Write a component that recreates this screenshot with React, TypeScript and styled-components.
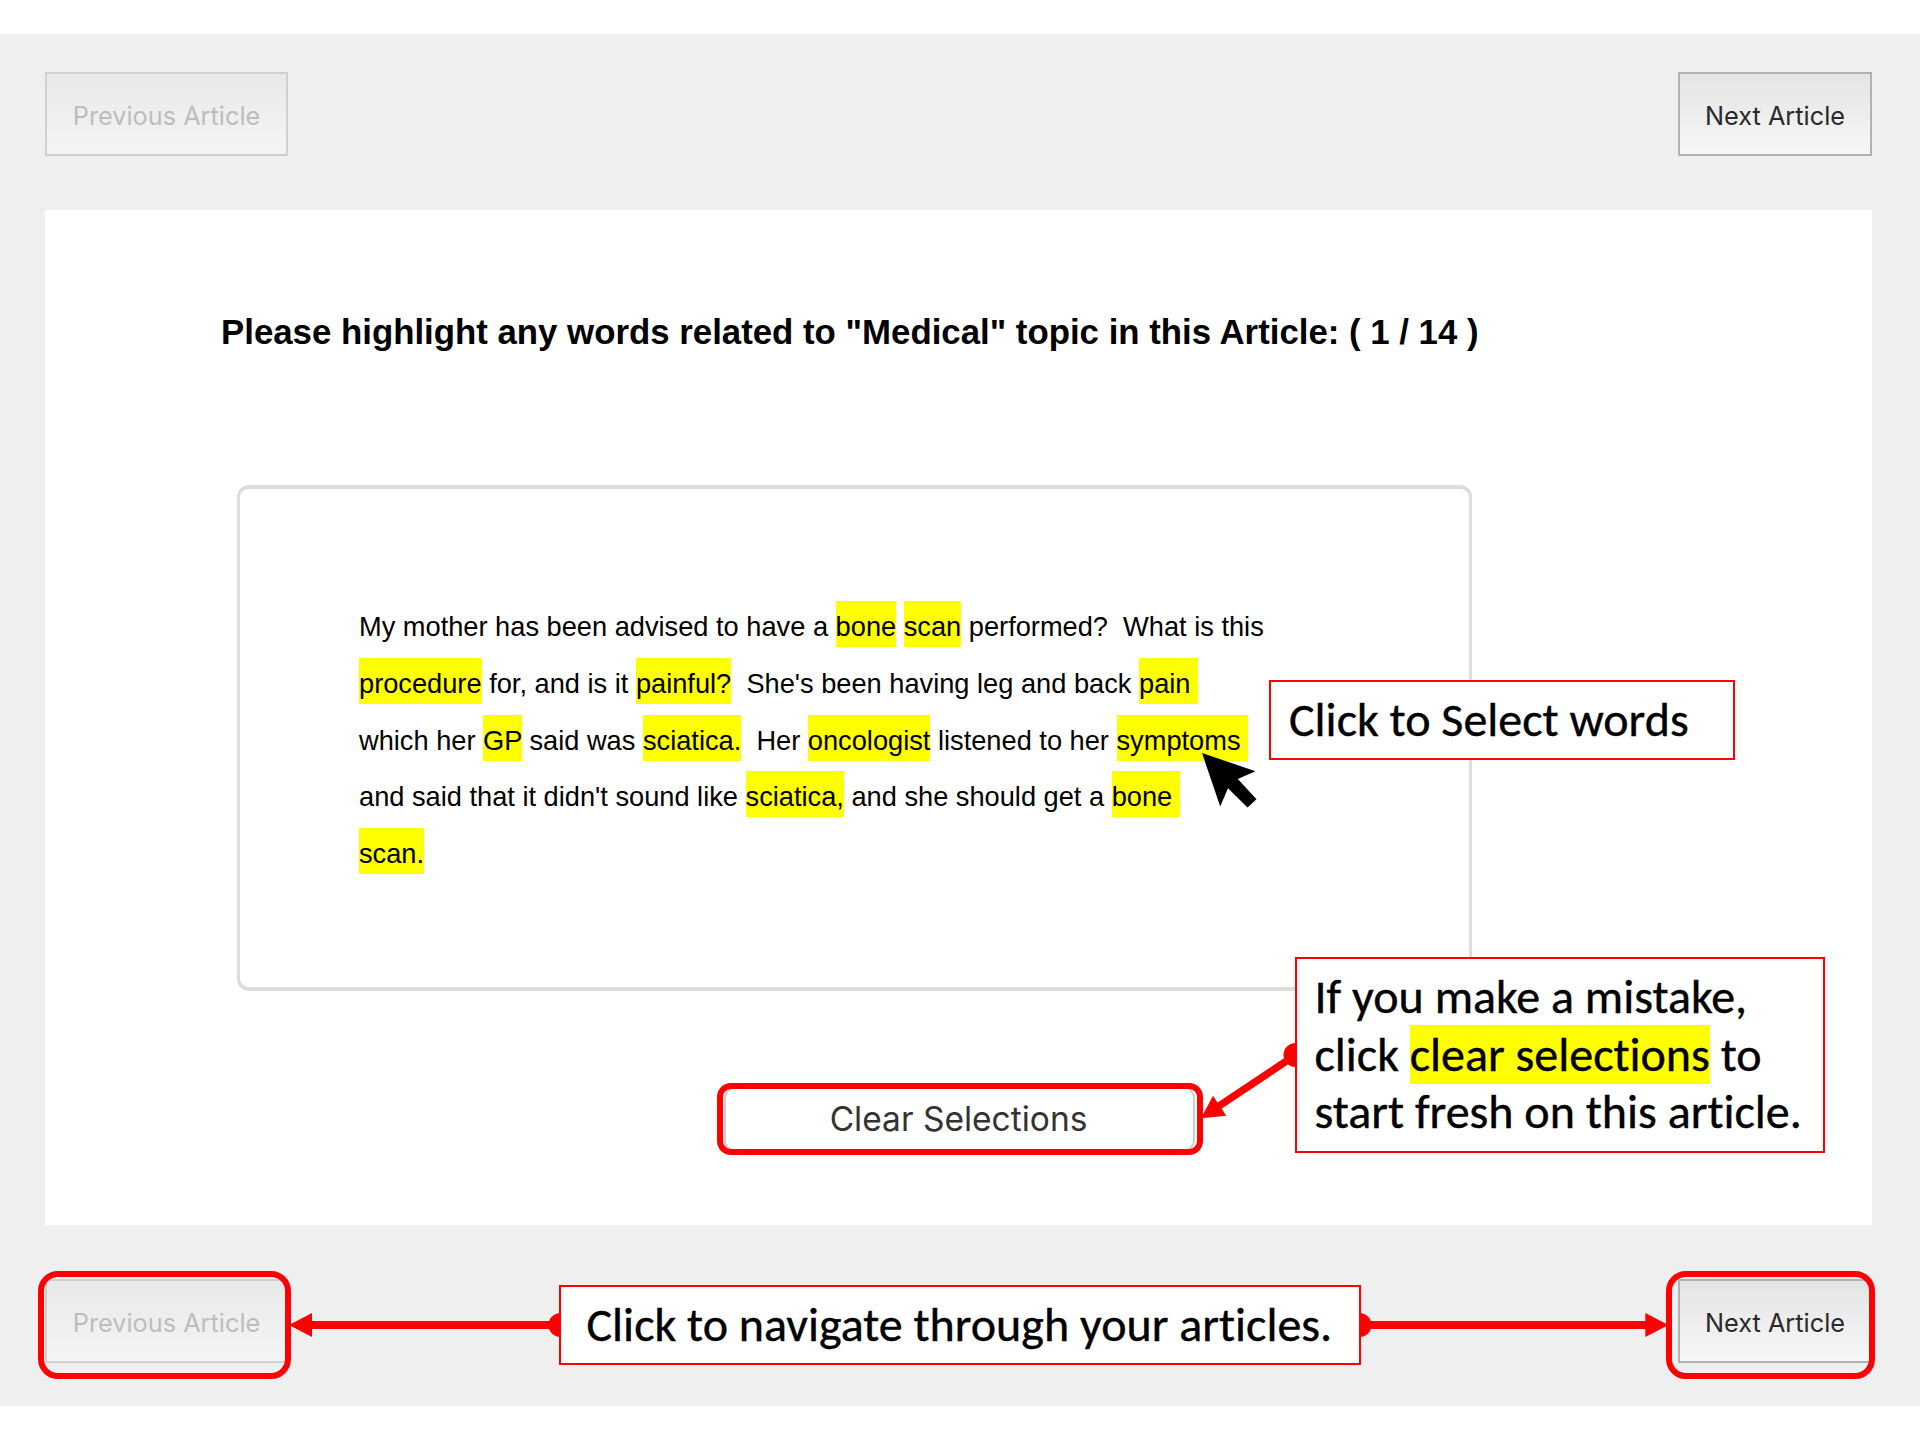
import React from 'react';
import styled, { createGlobalStyle } from 'styled-components';

const GlobalStyle = createGlobalStyle`
  *, *::before, *::after { box-sizing: border-box; }
  body { margin: 0; background: #fff; }
`;

const Stage = styled.main`
  position: relative;
  width: 1920px;
  height: 1440px;
  padding-top: 34px;
  overflow: hidden;
`;

const Screen = styled.div`
  display: flex;
  flex-direction: column;
  width: 1920px;
  height: 1372px;
  padding: 38px 48px 0 45px;
  background: #efefef;
`;

const NavBar = styled.nav`
  display: flex;
  justify-content: space-between;
`;

const NavButton = styled.button<{ $width: number }>`
  width: ${({ $width }) => $width}px;
  height: 84px;
  padding: 4px 0 0;
  border: 2px solid #b2b2b2;
  border-radius: 0;
  background: linear-gradient(#e4e4e4, #f7f7f7);
  color: #2a2a2a;
  font: 400 25.3px/1 Inter, sans-serif;
  white-space: nowrap;

  &:disabled {
    border-color: #d0d0d0;
    background: linear-gradient(#e9e9e9, #f4f4f4);
    color: #bdbdbd;
  }
`;

const Panel = styled.section`
  display: flex;
  flex-direction: column;
  align-items: flex-start;
  height: 1015px;
  margin: 54px 0;
  padding: 102px 0 0 175px;
  background: #fff;
`;

const Heading = styled.h1`
  margin: 0 0 0 1px;
  color: #000;
  font: 700 34.8px/40px 'Liberation Sans', Arial, sans-serif;
  white-space: nowrap;
`;

const ArticleCard = styled.article`
  width: 1235px;
  height: 506px;
  margin: 133px 0 0 17px;
  padding: 110.2px 0 0 119px;
  border: 4px solid #dcdcdc;
  border-right-width: 3.5px;
  border-left-width: 3.5px;
  border-radius: 12px;
`;

const Line = styled.p`
  margin: 0;
  color: #000;
  font: 400 27.22px/56.7px 'Liberation Sans', Arial, sans-serif;
  white-space: pre;
`;

const Mark = styled.mark`
  padding: 10px 0 5px;
  background: #ff0;
  color: inherit;
`;

const ClearButton = styled.button`
  width: 471px;
  height: 66px;
  margin: 95px 0 0 504px;
  padding: 2px 2px 0 0;
  border: 2px solid #cfcfcf;
  border-radius: 12px;
  background: #fff;
  color: #333;
  font: 400 33.5px/1 Inter, sans-serif;
`;

const Ring = styled.div<{ $x: number; $y: number; $w: number; $h: number; $r: number }>`
  position: absolute;
  left: ${({ $x }) => $x}px;
  top: ${({ $y }) => $y}px;
  width: ${({ $w }) => $w}px;
  height: ${({ $h }) => $h}px;
  border: 6px solid #f00;
  border-radius: ${({ $r }) => $r}px;
  pointer-events: none;
`;

const Overlay = styled.svg`
  position: absolute;
  inset: 0;
  pointer-events: none;
`;

const Callout = styled.aside<{ $x: number; $y: number; $w: number; $h: number; $pad: string }>`
  position: absolute;
  left: ${({ $x }) => $x}px;
  top: ${({ $y }) => $y}px;
  width: ${({ $w }) => $w}px;
  height: ${({ $h }) => $h}px;
  padding: ${({ $pad }) => $pad};
  border: 2px solid #f00;
  background: #fff;
  color: #000;
  font: 400 48px/57.4px Carlito, Calibri, Lato, sans-serif;
  font-variant-ligatures: none;
  -webkit-text-stroke: 0.4px #000;
  white-space: nowrap;
`;

const Key = styled.span`
  background: #ff0;
`;

/* Words wrapped in [brackets] are the ones the reader has selected. */
const article = [
  'My mother has been advised to have a [bone] [scan] performed?  What is this',
  "[procedure] for, and is it [painful?]  She's been having leg and back [pain ]",
  'which her [GP] said was [sciatica.]  Her [oncologist] listened to her [symptoms ]',
  "and said that it didn't sound like [sciatica,] and she should get a [bone ]",
  '[scan.]',
];

const ArticleLine = ({ text }: { text: string }) => (
  <Line>
    {text
      .split(/(\[[^\]]+\])/)
      .filter(Boolean)
      .map((part, i) => (part.startsWith('[') ? <Mark key={i}>{part.slice(1, -1)}</Mark> : part))}
  </Line>
);

const ArticleNav = () => (
  <NavBar>
    <NavButton $width={243} disabled>
      Previous Article
    </NavButton>
    <NavButton $width={194}>Next Article</NavButton>
  </NavBar>
);

export default function App() {
  return (
    <Stage>
      <GlobalStyle />
      <Screen>
        <ArticleNav />
        <Panel>
          <Heading>Please highlight any words related to "Medical" topic in this Article: ( 1 / 14 )</Heading>
          <ArticleCard>
            {article.map((text) => (
              <ArticleLine key={text} text={text} />
            ))}
          </ArticleCard>
          <ClearButton>Clear Selections</ClearButton>
        </Panel>
        <ArticleNav />
      </Screen>

      <Ring $x={717} $y={1083} $w={486} $h={72} $r={14} />
      <Ring $x={38} $y={1271} $w={253} $h={108} $r={20} />
      <Ring $x={1666} $y={1271} $w={209} $h={108} $r={20} />

      <Overlay width="1920" height="1440" viewBox="0 0 1920 1440">
        <g fill="#f00" stroke="none">
          <circle cx="1295.5" cy="1055" r="12" />
          <path d="M1295.5 1055L1216 1108" stroke="#f00" strokeWidth="7.5" />
          <path d="M1201 1118.3L1213 1095.7L1226.3 1115.7Z" />
          <circle cx="560.5" cy="1325" r="12" />
          <path d="M310 1321H560V1329H310Z" />
          <path d="M289 1325L312 1313V1337Z" />
          <circle cx="1359.5" cy="1325" r="12" />
          <path d="M1360 1321H1647V1329H1360Z" />
          <path d="M1668.5 1325L1645.3 1313V1337Z" />
        </g>
        <path d="M1202 753L1255.5 771.2L1237.8 779L1256.5 799.3L1247.5 807.5L1228 788.3L1220.2 806.5Z" fill="#000" />
      </Overlay>

      <Callout $x={1269} $y={680} $w={466} $h={80} $pad="9px 0 0 18px">
        Click to Select words
      </Callout>
      <Callout $x={1295} $y={957} $w={530} $h={196} $pad="9.3px 0 0 17.5px">
        If you make a mistake,
        <br />
        click <Key>clear selections</Key> to
        <br />
        start fresh on this article.
      </Callout>
      <Callout $x={559} $y={1285} $w={802} $h={80} $pad="9px 0 0 25.5px">
        Click to navigate through your articles.
      </Callout>
    </Stage>
  );
}
